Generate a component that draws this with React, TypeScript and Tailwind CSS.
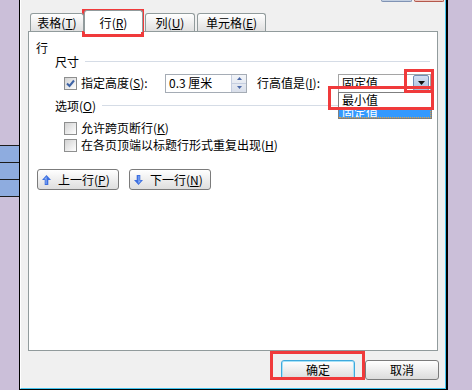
import React from "react";

const Box = ({ checked }: { checked?: boolean }) => (
  <span className="w-[13px] h-[13px] shrink-0 border border-[#8e8f8f] bg-linear-to-br from-[#d2d2d2] to-white flex items-center justify-center">
    {checked && (
      <svg width="9" height="9" viewBox="0 0 9 9">
        <path d="M1 4.5 L3.5 7 L8 1.5" fill="none" stroke="#3e63a6" strokeWidth="2" />
      </svg>
    )}
  </span>
);

const Mn = ({ k }: { k: string }) => (
  <span>
    (<u className="underline-offset-[1px]">{k}</u>)
  </span>
);

const Arrow = ({ down }: { down?: boolean }) => (
  <svg width="9" height="10" viewBox="0 0 9 10" className={down ? "rotate-180" : ""}>
    <path d="M4.5 0 L9 5 H6.3 V10 H2.7 V5 H0 Z" fill="#3d6fe0" />
    <path d="M4.5 1.5 L2 4.3 H3.6 V9 H4.6 V1.5 Z" fill="#8fb3f5" />
  </svg>
);

const Section = ({ title, children }: { title: React.ReactNode; children?: React.ReactNode }) => (
  <div className="h-[13px] flex items-center pl-[26px] pr-[7px]">
    <span className="whitespace-nowrap">{title}</span>
    <span className="flex-1 ml-[6px] h-px bg-[#d5dce6]" />
    {children}
  </div>
);

const Spin = () => (
  <div className="w-[15px] h-full flex flex-col border-l border-[#c5cee0] bg-linear-to-b from-[#f2f4f8] to-[#d9dfea]">
    <div className="flex-1 flex items-center justify-center border-b border-[#c5cee0]">
      <svg width="5" height="3" viewBox="0 0 5 3"><path d="M2.5 0 L5 3 H0 Z" fill="#4d6aa8" /></svg>
    </div>
    <div className="flex-1 flex items-center justify-center">
      <svg width="5" height="3" viewBox="0 0 5 3"><path d="M0 0 H5 L2.5 3 Z" fill="#4d6aa8" /></svg>
    </div>
  </div>
);

const App = () => {
  return (
    <div className="relative flex w-[472px] h-[390px] overflow-hidden bg-[#cbbfd9] font-['Noto_Sans_CJK_SC',sans-serif] text-[12px] leading-none text-black">
      {/* left strip of the document behind */}
      <div className="w-[19px] shrink-0 flex flex-col">
        <div className="h-[145px]" />
        <div className="h-px bg-[#1c1c1c]" />
        <div className="h-[16px] bg-[#8eacdf]" />
        <div className="h-px bg-[#1c1c1c]" />
        <div className="h-[16px] bg-[#8eacdf]" />
        <div className="h-px bg-[#1c1c1c]" />
        <div className="h-[16px] bg-[#8eacdf]" />
        <div className="h-px bg-[#1c1c1c]" />
      </div>

      {/* dialog */}
      <div className="w-[429px] shrink-0 h-full border-l border-r-2 border-b border-black">
        <div className="h-full flex flex-col bg-[#f0f0f0] border-l border-r border-b border-l-white border-r-[#44c4ee] border-b-[#44c4ee]">
          <div className="h-[2px] flex justify-end gap-[2px] pr-px">
            <div className="w-[31px] h-[2px] bg-[#c3d0e2] border-x border-b border-[#8093b4] rounded-b-[2px]" />
            <div className="w-[30px] h-[2px] bg-[#ecc6bf] border-x border-b border-[#b4584c] rounded-b-[2px]" />
          </div>

          {/* tabs */}
          <div className="relative z-10 mt-[8px] -mb-px h-[22px] pl-[9px] flex items-end">
            <div className="w-[54px] h-[18px] mb-px border border-b-0 border-[#919b9c] rounded-t-[3px] bg-linear-to-b from-white to-[#e0e0e0] flex items-center justify-center">
              表格<Mn k="T" />
            </div>
            <div className="w-[59px] h-[22px] pt-[3px] border border-b-0 border-[#919b9c] rounded-t-[3px] bg-white flex items-center justify-center">
              行<Mn k="R" />
            </div>
            <div className="ml-[2px] w-[50px] h-[18px] mb-px border border-b-0 border-[#919b9c] rounded-t-[3px] bg-linear-to-b from-white to-[#e0e0e0] flex items-center justify-center">
              列<Mn k="U" />
            </div>
            <div className="ml-[2px] w-[69px] h-[18px] mb-px border border-b-0 border-[#919b9c] rounded-t-[3px] bg-linear-to-b from-white to-[#e0e0e0] flex items-center justify-center">
              单元格<Mn k="E" />
            </div>
          </div>

          {/* tab panel */}
          <div className="ml-[7px] w-[410px] h-[320px] shrink-0 border border-[#919b9c] bg-white flex flex-col">
            <div className="mt-[9px] h-[13px] pl-[7px] flex items-center">行</div>

            <div className="mt-px">
              <Section title="尺寸" />
            </div>

            <div className="mt-[5px] h-[20px] pl-[35px] flex items-center">
              <Box checked />
              <span className="ml-[4px] w-[84px] whitespace-nowrap">
                指定高度<Mn k="S" />:
              </span>
              <div className="w-[82px] h-[19px] border border-[#a5acb5] flex items-center">
                <span className="flex-1 pl-[3px] whitespace-nowrap">0.3 厘米</span>
                <Spin />
              </div>
              <span className="ml-[10px] w-[81px] whitespace-nowrap">
                行高值是<Mn k="I" />:
              </span>
              <div className="relative w-[93px] h-[19px] border border-[#a5a5a5] flex items-center justify-between pl-[3px] pr-px">
                <span>固定值</span>
                <span className="w-[16px] h-[16px] border border-[#6f8db5] rounded-[2px] bg-linear-to-b from-[#d3e0f3] to-[#a9bfdf] flex items-center justify-center">
                  <svg width="7" height="4" viewBox="0 0 7 4"><path d="M0 0 H7 L3.5 4 Z" fill="#111" /></svg>
                </span>
                <div className="absolute left-[-1px] top-full w-[94px] border border-[#7f7f7f] bg-white">
                  <div className="h-[14px] pl-[3px] flex items-center">最小值</div>
                  <div className="h-[11px] pl-[3px] overflow-hidden bg-[#3399ff] text-white leading-[11px] border-r border-b border-dotted border-[#e8a33c]">
                    固定值
                  </div>
                </div>
              </div>
            </div>

            <div className="mt-[6px]">
              <Section title={<>选项<Mn k="O" /></>} />
            </div>

            <div className="mt-[9px] h-[14px] pl-[35px] flex items-center">
              <Box />
              <span className="ml-[4px]">
                允许跨页断行<Mn k="K" />
              </span>
            </div>
            <div className="mt-[3px] h-[14px] pl-[35px] flex items-center">
              <Box />
              <span className="ml-[4px]">
                在各页顶端以标题行形式重复出现<Mn k="H" />
              </span>
            </div>

            <div className="mt-[17px] pl-[8px] flex gap-[10px]">
              <button className="w-[82px] h-[21px] rounded-[3px] border border-[#7b7b7b] bg-linear-to-b from-white to-[#dedede] flex items-center pl-[4px]">
                <Arrow />
                <span className="ml-[7px]">
                  上一行<Mn k="P" />
                </span>
              </button>
              <button className="w-[82px] h-[21px] rounded-[3px] border border-[#7b7b7b] bg-linear-to-b from-white to-[#dedede] flex items-center pl-[4px]">
                <Arrow down />
                <span className="ml-[7px]">
                  下一行<Mn k="N" />
                </span>
              </button>
            </div>
          </div>

          {/* dialog buttons */}
          <div className="mt-[9px] pr-[6px] flex justify-end gap-[10px]">
            <button className="w-[74px] h-[20px] rounded-[3px] border border-[#3fa9dc] shadow-[inset_0_0_0_1px_#a6e2f8] bg-linear-to-b from-white to-[#dcdcdc] flex items-center justify-center">
              确定
            </button>
            <button className="w-[74px] h-[20px] rounded-[3px] border border-[#7b7b7b] bg-linear-to-b from-white to-[#dcdcdc] flex items-center justify-center">
              取消
            </button>
          </div>
        </div>
      </div>

      <div className="w-[24px] shrink-0" />

      {/* red annotation boxes */}
      <div className="absolute left-[82px] top-[9px] w-[62px] h-[28px] border-[3px] border-[#f03a3b]" />
      <div className="absolute left-[404px] top-[69px] w-[30px] h-[24px] border-[3px] border-[#f03a3b]" />
      <div className="absolute left-[328px] top-[86px] w-[106px] h-[24px] border-[3px] border-[#f03a3b]" />
      <div className="absolute left-[270px] top-[351px] w-[95px] h-[29px] border-[3px] border-[#f03a3b]" />
    </div>
  );
};

export default App;
